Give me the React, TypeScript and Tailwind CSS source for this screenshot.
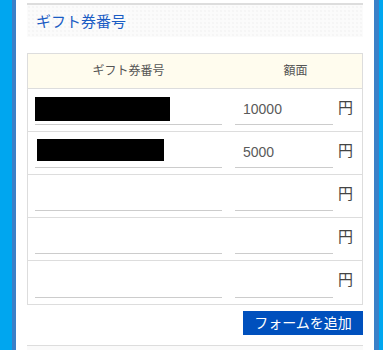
const rows = [
  { redact: 'w-[135px] h-[24px] mt-[3px] ml-0', amount: '10000' },
  { redact: 'w-[127px] h-[22px] mt-[2px] ml-[2px]', amount: '5000' },
  { redact: '', amount: '' },
  { redact: '', amount: '' },
  { redact: '', amount: '' },
];

export default function App() {
  return (
    <div
      className="flex h-[350px] w-[383px] overflow-hidden bg-white"
      style={{ fontFamily: '"Liberation Sans", "Noto Sans CJK JP", sans-serif' }}
    >
      {/* left side background */}
      <div className="w-[12px] bg-[#00a6ef]" />
      <div className="w-[4px] bg-[#3a80c8]" />

      <div className="flex flex-1 flex-col px-[11px]">
        {/* Heading */}
        <div className="mt-[3px] h-[34px] border-t-2 border-[#dddddd] bg-[#fbfbfb] bg-[radial-gradient(#eeeeee_0.6px,transparent_0.8px)] bg-[size:4px_4px] pl-[9px] pt-[6px] text-[15px] text-[#1a5cc4]">
          ギフト券番号
        </div>

        {/* Table */}
        <div className="mt-[16px] border border-[#dddddd]">
          <div className="flex h-[35px] items-center border-b border-[#dddddd] bg-[#fffcee] text-[12px] text-[#555555]">
            <div className="w-[201px] text-center">ギフト券番号</div>
            <div className="flex-1 text-center">額面</div>
          </div>
          {rows.map((r, i) => (
            <div
              key={i}
              className={`flex h-[43px] items-end pb-[6px] ${i < rows.length - 1 ? 'border-b border-[#dddddd]' : ''}`}
            >
              <div className="ml-[7px] h-[31px] w-[187px] border-b border-[#cccccc]">
                {r.redact && <div className={`bg-black ${r.redact}`} />}
              </div>
              <div className="ml-[13px] flex h-[31px] w-[98px] items-center border-b border-[#cccccc] pl-[8px] text-[14px] text-[#5a5a5a]">
                {r.amount}
              </div>
              <div className="ml-[5px] self-center pt-[2px] text-[15px] text-[#444444]">円</div>
            </div>
          ))}
        </div>

        <div className="mt-[6px] flex justify-end">
          <button className="h-[24px] w-[120px] bg-[#0050bd] text-[14px] text-white">
            フォームを追加
          </button>
        </div>

        <div className="mt-[10px] flex-1 border-t border-[#dddddd] bg-[#fafafa]" />
      </div>

      {/* right side background */}
      <div className="w-[5px] bg-[#3a80c8]" />
      <div className="w-[4px] bg-[#00a6ef]" />
    </div>
  );
}
